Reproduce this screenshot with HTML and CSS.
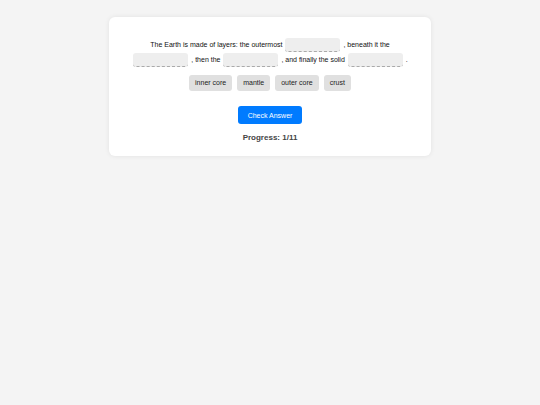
FILE: index.html
```html
<!DOCTYPE html>
<html lang="en">
<head>
    <meta charset="UTF-8">
    <meta name="viewport" content="width=device-width, initial-scale=1.0">
    <title>Earth Layers</title>
    <link rel="stylesheet" href="styles.css">
</head>
<body>
    <div class="container">
        <p class="sentence">
            The Earth is made of layers: the outermost <span class="blank"></span> , beneath it the
            <span class="blank"></span> , then the <span class="blank"></span> , and finally the solid <span class="blank"></span> .
        </p>
        <div class="options">
            <span class="chip">inner core</span>
            <span class="chip">mantle</span>
            <span class="chip">outer core</span>
            <span class="chip">crust</span>
        </div>
        <button class="check">Check Answer</button>
        <div class="progress">Progress: 1/11</div>
    </div>
</body>
</html>
```

FILE: styles.css
```css
body {
    font-family: "Liberation Sans", Arial, sans-serif;
    background: #f4f4f4;
    margin: 0;
    padding: 17px 0;
}
.container {
    width: 322px;
    margin: 0 auto;
    background: #fff;
    border-radius: 6px;
    box-shadow: 0 0 5px rgba(0, 0, 0, 0.08);
    padding: 20px 20px 14px;
    box-sizing: border-box;
    text-align: center;
}
.sentence {
    font-size: 7px;
    line-height: 15px;
    margin: 0;
    color: #111;
}
.blank {
    display: inline-block;
    width: 55px;
    height: 13px;
    background: #eee;
    border-bottom: 1px dashed #aaa;
    border-radius: 3px;
    vertical-align: middle;
    margin: 0 1px;
}
.options {
    display: flex;
    justify-content: center;
    gap: 5px;
    margin-top: 8px;
}
.chip {
    font-size: 7px;
    line-height: 8px;
    background: #e0e0e0;
    border-radius: 3px;
    padding: 4px 6px;
    color: #222;
}
.check {
    display: block;
    margin: 15px auto 0;
    font-family: inherit;
    font-size: 7px;
    color: #fff;
    background: #007bff;
    border: none;
    border-radius: 3px;
    width: 64px;
    height: 18px;
}
.progress {
    margin-top: 9px;
    font-size: 8px;
    font-weight: bold;
    color: #444;
}
```
